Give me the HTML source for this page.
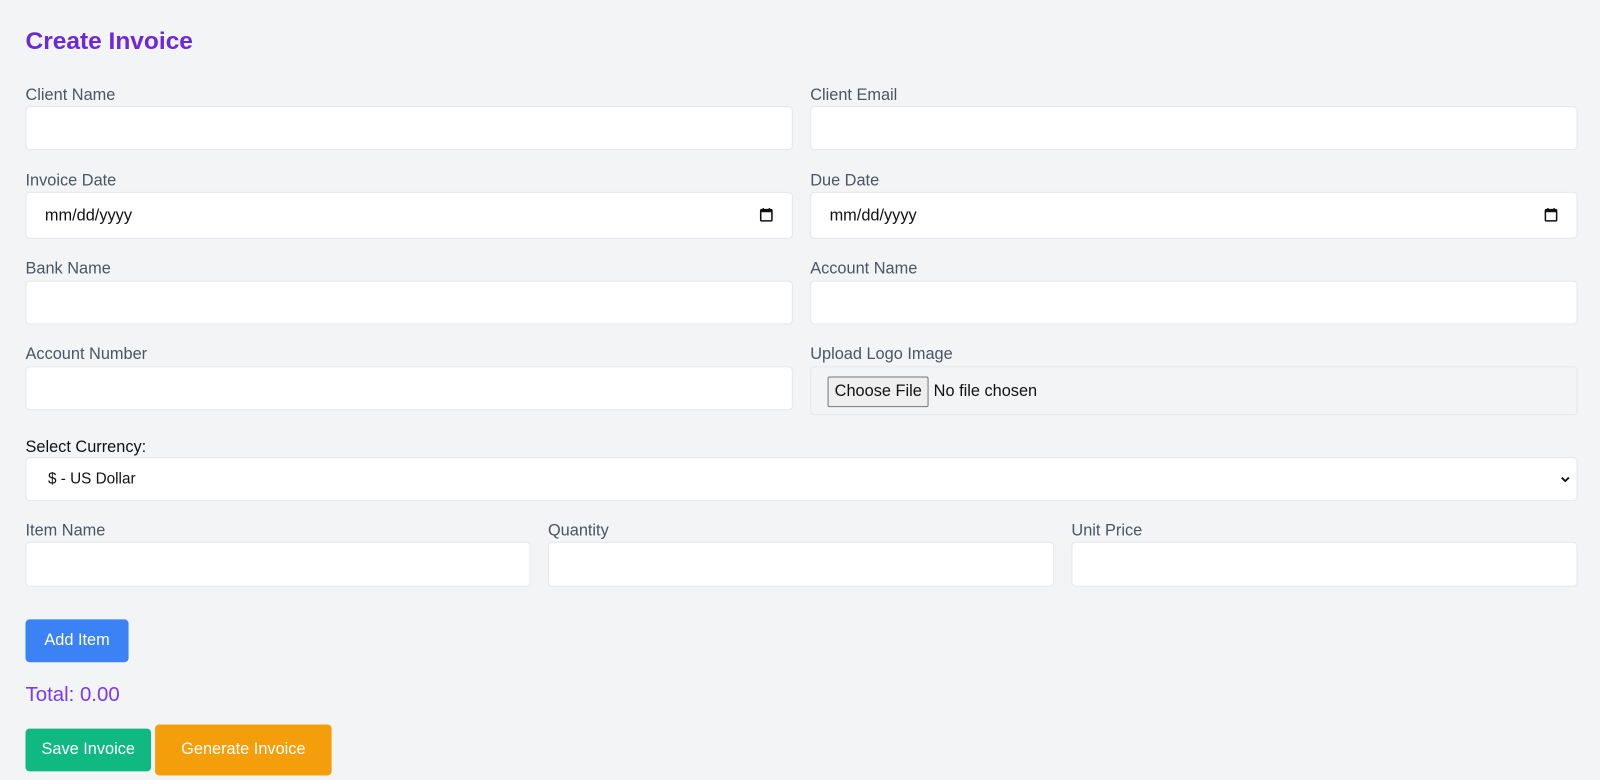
<!DOCTYPE html>
<html><head><style>
html,body{margin:0;background:#f3f4f6;width:1600px;height:780px;overflow:hidden}
#w{position:relative;width:1568px;height:765px;transform:scale(1.0204);transform-origin:0 0;font-family:"Liberation Sans",sans-serif}
.a{position:absolute}
.l{position:absolute;font-size:16px;color:#4b5563;line-height:20px}
.i{position:absolute;background:#fff;border:1px solid #e5e7eb;border-radius:4px;box-sizing:border-box}
.d{font-size:16px;color:#111;line-height:20px}
.btn{position:absolute;color:#fff;font-size:16px;border-radius:4px;display:flex;align-items:center;justify-content:center}
</style></head><body><div id="w">
<div class="a" style="left:25px;top:27px;font-size:24px;font-weight:bold;color:#6d28d9">Create Invoice</div>
<div class="l" style="left:25px;top:84px">Client Name</div>
<div class="l" style="left:794px;top:84px">Client Email</div>
<div class="i" style="left:25px;top:104px;width:752px;height:43px"></div>
<div class="i" style="left:794px;top:104px;width:752px;height:43px"></div>
<div class="l" style="left:25px;top:168px">Invoice Date</div>
<div class="l" style="left:794px;top:168px">Due Date</div>
<div class="i" style="left:25px;top:188px;width:752px;height:46px"><span class="a d" style="left:18px;top:13px">mm/dd/yyyy</span><svg class="a" style="right:18px;top:14px" width="14" height="15" viewBox="0 0 14 15"><rect x="1.5" y="2.5" width="11" height="11" rx="1" fill="none" stroke="#111" stroke-width="1.5"/><rect x="1.5" y="2.5" width="11" height="2.5" fill="#111"/><path d="M4 1v2.5M10 1v2.5" stroke="#111" stroke-width="1.5"/></svg></div>
<div class="i" style="left:794px;top:188px;width:752px;height:46px"><span class="a d" style="left:18px;top:13px">mm/dd/yyyy</span><svg class="a" style="right:18px;top:14px" width="14" height="15" viewBox="0 0 14 15"><rect x="1.5" y="2.5" width="11" height="11" rx="1" fill="none" stroke="#111" stroke-width="1.5"/><rect x="1.5" y="2.5" width="11" height="2.5" fill="#111"/><path d="M4 1v2.5M10 1v2.5" stroke="#111" stroke-width="1.5"/></svg></div>
<div class="l" style="left:25px;top:254px">Bank Name</div>
<div class="l" style="left:794px;top:254px">Account Name</div>
<div class="i" style="left:25px;top:275px;width:752px;height:43px"></div>
<div class="i" style="left:794px;top:275px;width:752px;height:43px"></div>
<div class="l" style="left:25px;top:338px">Account Number</div>
<div class="l" style="left:794px;top:338px">Upload Logo Image</div>
<div class="i" style="left:25px;top:359px;width:752px;height:43px"></div>
<div class="i" style="left:794px;top:359px;width:752px;height:48px;background:#f3f4f6"><span class="a d" style="left:16px;top:9px;border:1px solid #767676;background:#efefef;border-radius:2px;padding:0 6px;box-sizing:border-box;height:30px;line-height:28px">Choose File</span><span class="a d" style="left:120px;top:14px">No file chosen</span></div>
<div class="l" style="left:25px;top:429px;color:#111">Select Currency:</div>
<div class="i" style="left:25px;top:448px;width:1521px;height:43px"><span class="a" style="left:21px;top:12px;font-size:15px;color:#111">$ - US Dollar</span><svg class="a" style="right:6px;top:16px" width="10" height="10" viewBox="0 0 10 10"><path d="M1.5 3l3.5 3.5L8.5 3" fill="none" stroke="#111" stroke-width="1.8"/></svg></div>
<div class="l" style="left:25px;top:511px">Item Name</div>
<div class="l" style="left:537px;top:511px">Quantity</div>
<div class="l" style="left:1050px;top:511px">Unit Price</div>
<div class="i" style="left:25px;top:531px;width:495px;height:44px"></div>
<div class="i" style="left:537px;top:531px;width:496px;height:44px"></div>
<div class="i" style="left:1050px;top:531px;width:496px;height:44px"></div>
<div class="btn" style="left:25px;top:607px;width:101px;height:42px;background:#3b82f6">Add Item</div>
<div class="a" style="left:25px;top:670px;font-size:20px;color:#7c3aed">Total: 0.00</div>
<div class="btn" style="left:25px;top:714px;width:123px;height:42px;background:#10b981">Save Invoice</div>
<div class="btn" style="left:152px;top:710px;width:173px;height:50px;background:#f59e0b">Generate Invoice</div>
</div></body></html>
